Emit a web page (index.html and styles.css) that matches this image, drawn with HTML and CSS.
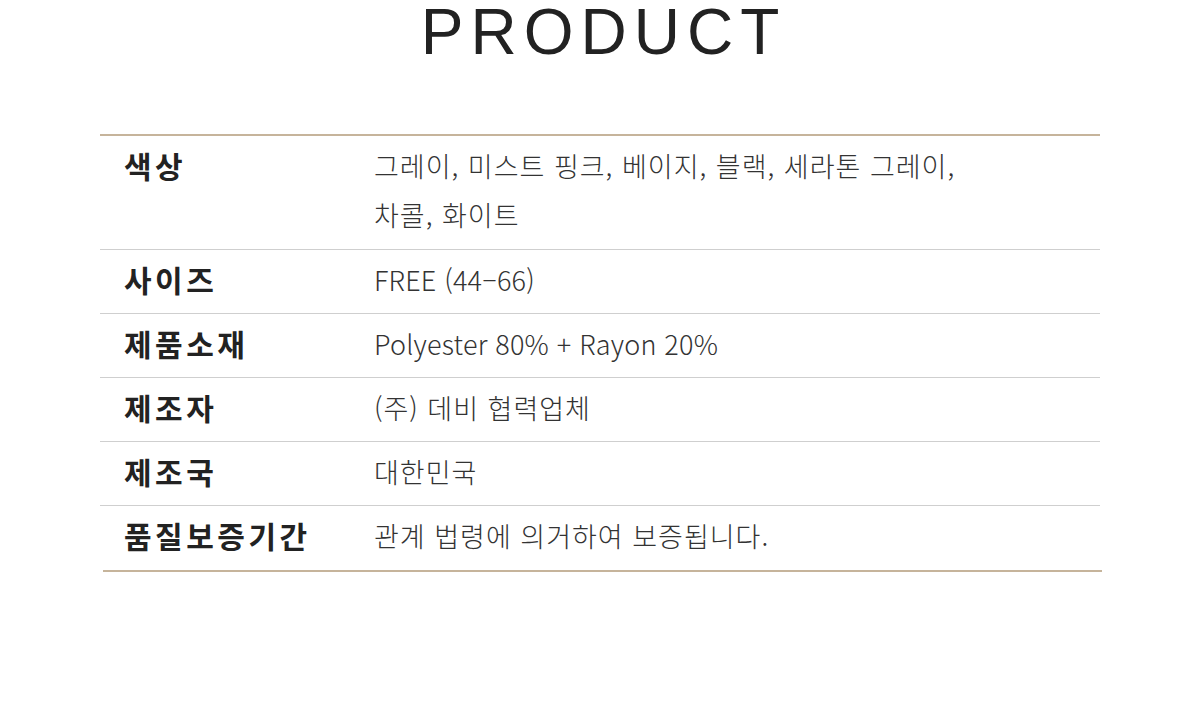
FILE: index.html
```html
<!DOCTYPE html>
<html lang="ko">
<head>
<meta charset="utf-8">
<title>PRODUCT</title>
<link rel="stylesheet" href="styles.css">
</head>
<body>
<h1 class="title">PRODUCT</h1>
<div class="spec">
  <div class="row first">
    <div class="label">색상</div>
    <div class="value">그레이, 미스트 핑크, 베이지, 블랙, 세라톤 그레이,<br>차콜, 화이트</div>
  </div>
  <div class="row">
    <div class="label">사이즈</div>
    <div class="value latin">FREE (44–66)</div>
  </div>
  <div class="row">
    <div class="label">제품소재</div>
    <div class="value latin">Polyester 80% + Rayon 20%</div>
  </div>
  <div class="row">
    <div class="label">제조자</div>
    <div class="value">(주) 데비 협력업체</div>
  </div>
  <div class="row">
    <div class="label">제조국</div>
    <div class="value">대한민국</div>
  </div>
  <div class="row last">
    <div class="label">품질보증기간</div>
    <div class="value">관계 법령에 의거하여 보증됩니다.</div>
  </div>
</div>
<div class="spec-end"></div>
</body>
</html>
```

FILE: styles.css
```css
html, body {
  margin: 0;
  padding: 0;
  background: #ffffff;
}

body {
  width: 1200px;
  height: 720px;
  overflow: hidden;
  font-family: "Noto Sans CJK KR", "Noto Sans", sans-serif;
  color: #222;
}

.title {
  margin: 0;
  padding: 2px 0 0 7px;
  height: 64px;
  font-family: "Liberation Sans", Arial, sans-serif;
  font-weight: 400;
  font-size: 64px;
  line-height: 60px;
  letter-spacing: 7px;
  text-align: center;
  color: #222;
}

.spec {
  margin: 68px 100px 0 100px;
  border-top: 2px solid #c6b49b;
}

.row {
  display: flex;
  align-items: flex-start;
  padding: 5px 0 9px 0;
  border-bottom: 1px solid #cfcfcf;
}

.row.first {
  padding-bottom: 10px;
}

.row.last {
  border-bottom: none;
  padding-bottom: 10px;
}

.label {
  width: 274px;
  padding-left: 24px;
  box-sizing: border-box;
  flex: none;
  font-size: 30px;
  font-weight: 700;
  line-height: 49px;
  color: #222;
  letter-spacing: 3.5px;
}

.value {
  font-size: 27px;
  font-weight: 300;
  line-height: 49px;
  color: #333;
  letter-spacing: 1px;
}

.value.latin {
  letter-spacing: 0.2px;
}

.spec-end {
  margin: 0 98px 0 103px;
  height: 2px;
  background: #c6b49b;
}
```
